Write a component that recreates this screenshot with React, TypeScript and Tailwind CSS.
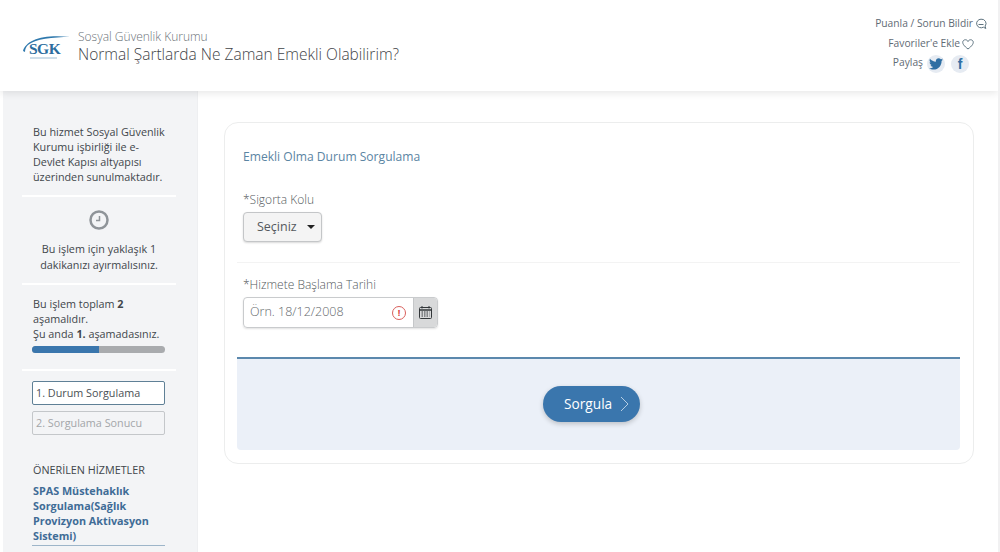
import React from "react";

const font = { fontFamily: '"Open Sans", sans-serif' };

const Logo = () => (
  <div className="relative w-[48px] h-[26px] shrink-0">
    <svg width="48" height="26" viewBox="0 0 48 26" className="absolute top-0 left-0">
      <path d="M0 17 C3 6 20 0 47 3 C30 3 12 5 5 11 C3 13 2 15 2 18 Z" fill="#2f79ad" />
      <path d="M7 24h27" stroke="#9fbdd3" strokeWidth="1" />
    </svg>
    <span className="absolute left-[6px] top-[5px] text-[15.5px] leading-[20px] font-bold text-[#2c6d9e] tracking-[-0.5px] font-['Liberation_Serif',serif]">
      SGK
    </span>
  </div>
);

const TwitterIcon = () => (
  <svg width="14" height="12" viewBox="0 0 24 20">
    <path
      d="M24 2.4c-.9.4-1.8.7-2.8.8 1-.6 1.8-1.6 2.2-2.7-1 .6-2 1-3.100 1.200C19.300.7 18 0 16.600 0c-2.700 0-4.900 2.200-4.900 4.900 0 .4 0 .8.1 1.100C7.700 5.800 4.100 3.900 1.700.9c-.4.700-.7 1.600-.7 2.500 0 1.700.9 3.200 2.200 4.100-.8 0-1.600-.2-2.200-.6v.1c0 2.400 1.700 4.400 3.900 4.800-.4.100-.8.200-1.300.2-.3 0-.6 0-.9-.1.600 2 2.400 3.400 4.600 3.400-1.700 1.300-3.800 2.100-6.100 2.100-.4 0-.8 0-1.200-.1C2.200 18.700 4.800 19.500 7.500 19.500c9.100 0 14-7.500 14-14v-.6c1-.7 1.800-1.600 2.500-2.500z"
      fill="#2f6fa3"
    />
  </svg>
);

const Header = () => (
  <header className="h-[91px] bg-white shadow-[0_2px_8px_rgba(0,0,0,0.1)] relative z-10 flex justify-between pl-[23px] pr-[11px]">
    <div className="flex items-center gap-[7px] pt-[2px]">
      <Logo />
      <div>
        <div className="text-[12px] leading-[15px] font-light text-[#6b7278]">Sosyal Güvenlik Kurumu</div>
        <div className="text-[15.5px] leading-[21px] font-light text-[#3f4448]">
          Normal Şartlarda Ne Zaman Emekli Olabilirim?
        </div>
      </div>
    </div>
    <div className="flex flex-col items-end pt-[14px] text-[10.25px] text-[#5f6b75]">
      <div className="flex items-center gap-[2px] h-[20px]">
        Puanla / Sorun Bildir
        <svg width="12" height="12" viewBox="0 0 12 12" fill="none" stroke="#5f7480" strokeWidth="1">
          <path d="M6 1.200a4.500 4.300 0 1 0 2.400 8l2.400 1.300-.7-2.400A4.500 4.300 0 0 0 6 1.200z" />
          <path d="M3.500 6.500h5" />
        </svg>
      </div>
      <div className="flex items-center gap-[2px] h-[20px] pr-[13px]">
        Favoriler'e Ekle
        <svg width="12" height="11" viewBox="0 0 24 22" fill="none" stroke="#5f7480" strokeWidth="2">
          <path d="M12 20 C4 14 1.500 10 1.500 6.500 C1.500 3.500 4 1.500 6.800 1.500 C9 1.500 11 2.800 12 5 C13 2.800 15 1.500 17.200 1.500 C20 1.500 22.500 3.500 22.500 6.500 C22.500 10 20 14 12 20 Z" />
        </svg>
      </div>
      <div className="flex items-center h-[20px] pr-[18px]">
        <span className="mr-[4px] mb-[2px]">Paylaş</span>
        <span className="w-[18px] h-[18px] rounded-full bg-[#e6ebf2] flex items-center justify-center mr-[6px]">
          <TwitterIcon />
        </span>
        <span className="w-[18px] h-[18px] rounded-full bg-[#e6ebf2] flex items-center justify-center text-[14px] font-bold text-[#2f6fa3] font-['Liberation_Sans',sans-serif]">
          f
        </span>
      </div>
    </div>
  </header>
);

const Sidebar = () => (
  <aside className="w-[195px] ml-[3px] shrink-0 bg-[#f3f4f6] border-r border-[#eeeff1] text-[10.8px] leading-[15px] text-[#41464b] overflow-hidden">
    <div className="ml-[19px] mr-[21px] pt-[33px] pb-[11px] border-b-2 border-white">
      <p className="pl-[11px] pr-[10px]">
        Bu hizmet Sosyal Güvenlik
        <br />
        Kurumu işbirliği ile e-
        <br />
        Devlet Kapısı altyapısı
        <br />
        üzerinden sunulmaktadır.
      </p>
    </div>
    <div className="ml-[19px] mr-[21px] border-b-2 border-white pt-[13px] pb-[10px] flex flex-col items-center text-center">
      <svg width="20" height="20" viewBox="0 0 20 20" fill="none" stroke="#8f9499" strokeWidth="2.500">
        <circle cx="10" cy="10" r="8.500" />
        <path d="M10.500 6v4.500H7" strokeWidth="1.500" />
      </svg>
      <p className="mt-[11px] leading-[16px]">
        Bu işlem için yaklaşık 1
        <br />
        dakikanızı ayırmalısınız.
      </p>
    </div>
    <div className="ml-[19px] mr-[21px] border-b-2 border-white pt-[11px] pb-[16px]">
      <div className="pl-[10px] pr-[11px]">
        <p className="pl-[1px]">
          Bu işlem toplam <b>2</b>
          <br />
          aşamalıdır.
          <br />
          Şu anda <b>1.</b> aşamadasınız.
        </p>
        <div className="h-[7px] mt-[5px] rounded-full bg-[#a9abae] overflow-hidden">
          <div className="w-1/2 h-full bg-[#3a76ad]" />
        </div>
      </div>
    </div>
    <div className="pl-[29px] pr-[32px] pt-[10px]">
      <div className="h-[24px] bg-white border border-[#5f8096] rounded-[2px] px-[3px] leading-[22px] text-[#4a4f54]">
        1. Durum Sorgulama
      </div>
      <div className="h-[24px] mt-[6px] border border-[#c4c7ca] rounded-[2px] px-[3px] leading-[22px] text-[#a3a6a9]">
        2. Sorgulama Sonucu
      </div>
      <div className="mt-[27px] pl-[1px]">ÖNERİLEN HİZMETLER</div>
      <div className="mt-[6px] pl-[1px] pb-[2px] border-b border-[#9db5c9] font-bold text-[#3f6c96]">
        SPAS Müstehaklık
        <br />
        Sorgulama(Sağlık
        <br />
        Provizyon Aktivasyon
        <br />
        Sistemi)
      </div>
    </div>
  </aside>
);

const Form = () => (
  <main className="flex-1 min-w-0 pl-[26px] pt-[31px]">
    <section className="w-[750px] h-[342px] border border-[#eceded] rounded-[14px] bg-white pt-[25px] pl-[12px] pr-[13px]">
      <h2 className="px-[6px] text-[12.1px] leading-[17px] text-[#5b85a3]">Emekli Olma Durum Sorgulama</h2>
      <div className="px-[6px] mt-[27px] pb-[20px] border-b border-[#f3f3f3]">
        <label className="block text-[12px] leading-[16px] font-light text-[#555b60]">*Sigorta Kolu</label>
        <div className="mt-[4px] w-[79px] h-[30px] rounded-[4px] border border-[#c4c6c8] bg-[#f4f4f4] shadow-[0_1px_2px_rgba(0,0,0,0.15)] flex items-center pl-[13px] text-[12.5px] text-[#55595d]">
          Seçiniz
          <span className="ml-[10px] w-0 h-0 border-x-[4px] border-x-transparent border-t-[4px] border-t-[#222]" />
        </div>
      </div>
      <div className="px-[6px] pt-[14px]">
        <label className="block text-[12px] leading-[16px] font-light text-[#555b60]">*Hizmete Başlama Tarihi</label>
        <div className="mt-[4px] w-[195px] h-[31px] rounded-[4px] border border-[#c9cbcd] shadow-[0_1px_2px_rgba(0,0,0,0.12)] flex overflow-hidden">
          <div className="flex-1 flex items-center pl-[6px] pr-[7px] text-[12.5px] font-light text-[#64696d] justify-between">
            Örn. 18/12/2008
            <span className="w-[14px] h-[14px] rounded-full border border-[#d9605c] text-[#d9403c] text-[9px] leading-[12px] text-center font-bold">
              !
            </span>
          </div>
          <div className="w-[24px] bg-[#d8d9da] border-l border-[#c5c7c9] flex items-center justify-center">
            <svg width="13" height="13" viewBox="0 0 13 13" fill="none" stroke="#33373a">
              <rect x="0.500" y="1.500" width="12" height="11" rx="1" />
              <path d="M0.500 4h12" strokeWidth="1.500" />
              <path d="M3 0v2.500M10 0v2.500" />
              <path d="M2.500 6h8M2.500 8h8M2.500 10h8" strokeDasharray="1.500 1" />
            </svg>
          </div>
        </div>
      </div>
      <div className="mt-[29px] h-[93px] border-t-2 border-[#5b88ad] bg-[#ebf0f8] rounded-b-[4px] flex justify-center pt-[27px]">
        <button className="mr-[14px] w-[97px] h-[36px] rounded-full bg-[#3a76ad] text-white text-[13.7px] shadow-[0_2px_5px_rgba(0,0,0,0.2)] flex items-center pl-[21px] gap-[8px]">
          Sorgula
          <svg width="9" height="16" viewBox="0 0 9 16" fill="none" stroke="#b5cde2" strokeWidth="1">
            <path d="M1 1l7 7-7 7" />
          </svg>
        </button>
      </div>
    </section>
  </main>
);

export default function App() {
  return (
    <div className="h-[552px] w-[1000px] overflow-hidden bg-white flex flex-col border-r-2 border-[#f1f1f2]" style={font}>
      <Header />
      <div className="flex flex-1 min-h-0">
        <Sidebar />
        <Form />
      </div>
    </div>
  );
}
